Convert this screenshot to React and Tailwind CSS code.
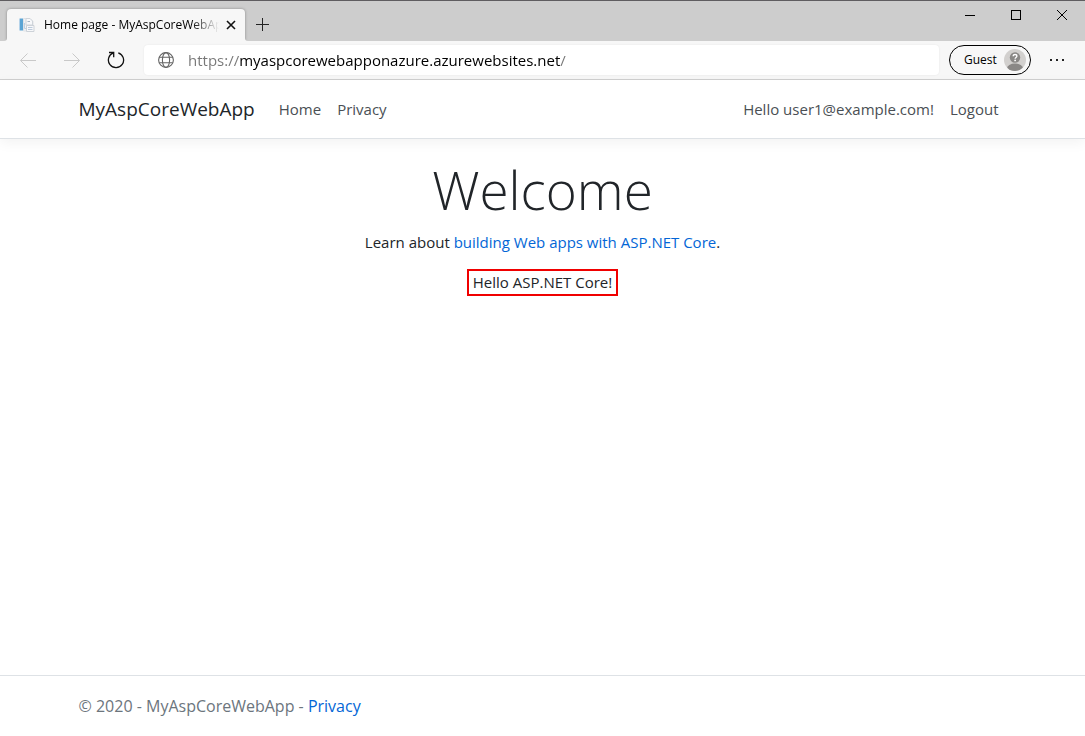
const iconButton = 'flex items-center justify-center shrink-0'

function WindowControls() {
  return (
    <div className="flex self-start">
      <button type="button" aria-label="Minimize" className={`${iconButton} w-[46px] h-7`}>
        <svg width="10" height="10" viewBox="0 0 10 10" stroke="#000" fill="none" shapeRendering="crispEdges">
          <path d="M0 5.5h10" />
        </svg>
      </button>
      <button type="button" aria-label="Maximize" className={`${iconButton} w-[46px] h-7`}>
        <svg width="10" height="10" viewBox="0 0 10 10" stroke="#000" fill="none" shapeRendering="crispEdges">
          <path d="M.5 .5h9v9h-9z" />
        </svg>
      </button>
      <button type="button" aria-label="Close" className={`${iconButton} w-[46px] h-7`}>
        <svg width="10" height="10" viewBox="0 0 10 10" stroke="#000" fill="none">
          <path d="M0 0l10 10M10 0L0 10" />
        </svg>
      </button>
    </div>
  )
}

function PageIcon() {
  return (
    <svg width="16" height="16" viewBox="0 0 16 16" className="shrink-0">
      <path d="M4.5 1.5h6.500l3 3v9.500H4.500z" fill="#f0f2f5" stroke="#dfe2e6" />
      <path d="M7 1.500h4l2.500 2.500v4H7z" fill="#f7f8fa" stroke="#cfd4da" />
      <path d="M8.500 4.500h2.500" stroke="#a9b6c6" />
      <path d="M5.500 6v5.500h2" stroke="#bfd0e2" fill="none" />
      <path d="M7.500 8.500h7.500v6H7.500z" fill="#f7f8fa" stroke="#cdd2d8" />
      <path d="M9 10.500h4.500M9 12.500h4.500" stroke="#bccadb" />
      <path d="M0 1.500h1v12H0z" fill="#b5d3ea" />
      <path d="M1 1.500h3v12H1z" fill="#5ba4d4" />
    </svg>
  )
}

function TabStrip() {
  return (
    <header className="flex h-[41px] border-t border-[#5f5d60] bg-[#cdcdcd] pl-[7px]">
      <div className="relative z-10 mt-2 flex w-[238px] items-center rounded-t bg-[#f7f7f7] pl-3 pr-1.5 shadow-[0_0_3px_rgba(0,0,0,0.35)] [clip-path:inset(-3px_-3px_0_-3px)]">
        <svg width="3" height="3" viewBox="0 0 3 3" className="absolute bottom-0 right-full">
          <path d="M3 0v3H0Q3 3 3 0z" fill="#f7f7f7" />
        </svg>
        <svg width="3" height="3" viewBox="0 0 3 3" className="absolute bottom-0 left-full">
          <path d="M0 0v3h3Q0 3 0 0z" fill="#f7f7f7" />
        </svg>
        <PageIcon />
        <span className="ml-[9px] min-w-0 flex-1 overflow-hidden whitespace-nowrap text-xs text-black [mask-image:linear-gradient(to_right,#000_84%,transparent)]">
          Home page - MyAspCoreWebApp
        </span>
        <button type="button" aria-label="Close tab" className={`${iconButton} size-4 ml-1`}>
          <svg width="10" height="10" viewBox="0 0 10 10" stroke="#111" strokeWidth="1.6" fill="none">
            <path d="M1 1l8 8M9 1L1 9" />
          </svg>
        </button>
      </div>
      <button type="button" aria-label="New tab" className={`${iconButton} w-[34px] pt-[7px]`}>
        <svg width="13" height="13" viewBox="0 0 13 13" stroke="#222" fill="none" shapeRendering="crispEdges">
          <path d="M6.500 0v13M0 6.500h13" />
        </svg>
      </button>
      <div className="flex-1" />
      <WindowControls />
    </header>
  )
}

function Toolbar() {
  return (
    <div className="flex h-[39px] items-center border-b border-[#d0d0d0] bg-[#f7f7f7]">
      <button type="button" aria-label="Back" disabled className={`${iconButton} ml-1.5 w-11 h-8`}>
        <svg width="16" height="15" viewBox="0 0 16 15" stroke="#c9c9c9" fill="none">
          <path d="M16 7.500H.8M7.500 .5l-7 7 7 7" />
        </svg>
      </button>
      <button type="button" aria-label="Forward" disabled className={`${iconButton} w-11 h-8`}>
        <svg width="16" height="15" viewBox="0 0 16 15" stroke="#c9c9c9" fill="none">
          <path d="M0 7.500h15.200M8.500 .5l7 7-7 7" />
        </svg>
      </button>
      <button type="button" aria-label="Refresh" className={`${iconButton} w-11 h-8`}>
        <svg width="18" height="18" viewBox="0 0 18 18" stroke="#111" strokeWidth="1.3" fill="none">
          <path d="M11.300 1.800A7.600 7.600 0 1 1 6.400 1.900" />
          <path d="M2 1.500h4.700v4.700" />
        </svg>
      </button>
      <div className="ml-1.5 flex h-[30px] min-w-0 flex-1 items-center rounded bg-white pl-3.5 shadow-[0_0_2px_rgba(0,0,0,0.08)]">
        <svg width="16" height="16" viewBox="0 0 16 16" stroke="#666" strokeWidth="1.1" fill="none" className="shrink-0">
          <circle cx="8" cy="8" r="7.400" />
          <ellipse cx="8" cy="8" rx="3.600" ry="7.400" />
          <path d="M1.200 5.300h13.600M1.200 10.700h13.600" />
        </svg>
        <input
          type="text"
          aria-label="Address"
          defaultValue="https://myaspcorewebapponazure.azurewebsites.net/"
          className="ml-3.5 min-w-0 flex-1 bg-[linear-gradient(to_right,#767676_52px,#000_52px,#000_372px,#767676_372px)] bg-clip-text text-[15px] leading-6 text-transparent outline-none"
        />
      </div>
      <button type="button" className="ml-2.5 flex h-[30px] w-[82px] shrink-0 items-center justify-between rounded-full border border-black pl-3.5 pr-1 text-xs text-black">
        Guest
        <svg width="22" height="22" viewBox="0 0 22 22">
          <defs>
            <clipPath id="avatar">
              <circle cx="11" cy="11" r="11" />
            </clipPath>
          </defs>
          <g clipPath="url(#avatar)">
            <path d="M0 0h22v22H0z" fill="#d2d0ce" />
            <circle cx="11" cy="8.500" r="5.200" fill="#8a8886" />
            <ellipse cx="11" cy="19.500" rx="8" ry="5" fill="#8a8886" />
          </g>
          <path d="M9.200 7.200c0-2.400 3.700-2.300 3.700-.1 0 1.400-1.800 1.400-1.800 2.700" fill="none" stroke="#fff" strokeWidth="1.4" />
          <circle cx="11.100" cy="11.400" r=".9" fill="#fff" />
        </svg>
      </button>
      <button type="button" aria-label="Settings and more" className={`${iconButton} ml-1.5 mr-2 w-10 h-8`}>
        <svg width="16" height="4" viewBox="0 0 16 4" fill="#222">
          <path d="M1 1h2v2H1zM7 1h2v2H7zM13 1h2v2h-2z" />
        </svg>
      </button>
    </div>
  )
}

function SiteNav() {
  return (
    <nav className="border-b border-[#dee2e6] bg-white shadow-[0_4px_12px_rgba(0,0,0,0.05)]">
      <div className="mx-auto flex h-[58px] max-w-[960px] items-center px-4 text-[15px] text-[#4a4f54]">
        <a href="#home" className="mr-6 text-[19px] text-[#212529]">MyAspCoreWebApp</a>
        <a href="#home" className="mr-4">Home</a>
        <a href="#privacy">Privacy</a>
        <a href="#account" className="ml-auto mr-4">Hello user1@example.com!</a>
        <button type="button" className="mr-2">Logout</button>
      </div>
    </nav>
  )
}

export default function App() {
  return (
    <div className="flex min-h-screen flex-col bg-white font-['Open_Sans',sans-serif] text-[#212529]">
      <TabStrip />
      <Toolbar />
      <SiteNav />
      <main className="flex flex-1 flex-col items-center px-4 pt-[18px] text-[15px]">
        <h1 className="text-[53px] leading-[66px] font-light">Welcome</h1>
        <p className="mt-[7px] leading-6">
          Learn about <a href="#learn" className="text-[#0366d6]">building Web apps with ASP.NET Core</a>.
        </p>
        <p className="mt-[15px] border-2 border-[#f00000] px-1 leading-[23px]">Hello ASP.NET Core!</p>
      </main>
      <footer className="border-t border-[#dee2e6]">
        <p className="mx-auto max-w-[960px] px-4 text-base leading-[60px] text-[#6c757d]">
          © 2020 - MyAspCoreWebApp - <a href="#privacy" className="text-[#0366d6]">Privacy</a>
        </p>
      </footer>
    </div>
  )
}
